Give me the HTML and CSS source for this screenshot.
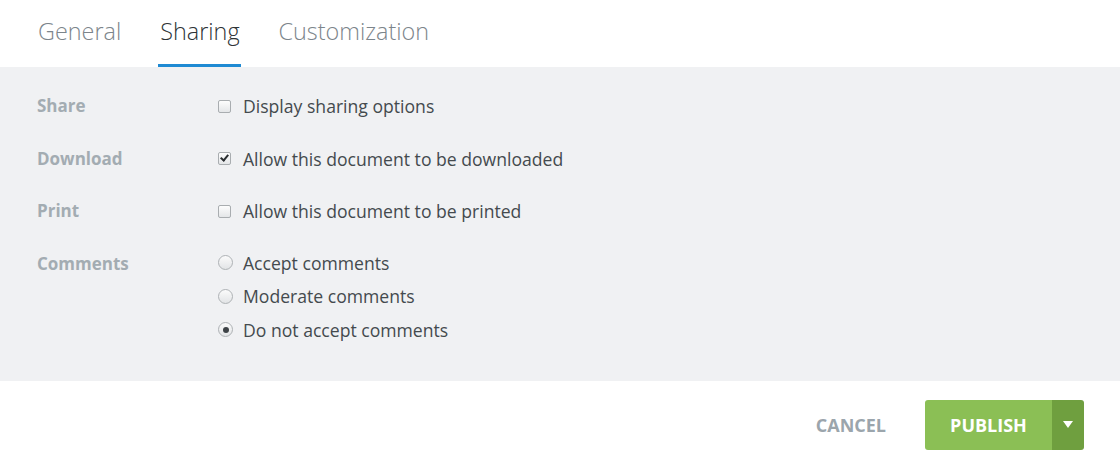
FILE: index.html
```html
<!DOCTYPE html>
<html lang="en">
<head>
  <meta charset="UTF-8" />
  <title>Document settings</title>
  <link rel="stylesheet" href="styles.css">
</head>
<body>
  <div class="tabs">
    <div class="tab">General</div>
    <div class="tab active">Sharing</div>
    <div class="tab">Customization</div>
  </div>

  <div class="panel">
    <div class="row">
      <div class="label">Share</div>
      <div class="options">
        <label class="opt"><span class="box"></span>Display sharing options</label>
      </div>
    </div>
    <div class="row">
      <div class="label">Download</div>
      <div class="options">
        <label class="opt"><span class="box checked"></span>Allow this document to be downloaded</label>
      </div>
    </div>
    <div class="row">
      <div class="label">Print</div>
      <div class="options">
        <label class="opt"><span class="box"></span>Allow this document to be printed</label>
      </div>
    </div>
    <div class="row">
      <div class="label">Comments</div>
      <div class="options radios">
        <label class="opt"><span class="radio"></span>Accept comments</label>
        <label class="opt"><span class="radio"></span>Moderate comments</label>
        <label class="opt"><span class="radio on"></span>Do not accept comments</label>
      </div>
    </div>
  </div>

  <div class="footer">
    <button class="cancel">CANCEL</button>
    <div class="publish">
      <button class="publish-main">PUBLISH</button>
      <button class="publish-more"><span class="caret"></span></button>
    </div>
  </div>
</body>
</html>
```

FILE: styles.css
```css
body {
  margin: 0;
  font-family: 'Open Sans', sans-serif;
  background: #ffffff;
  width: 1120px;
  height: 468px;
  overflow: hidden;
}

.tabs {
  display: flex;
  gap: 36px;
  padding: 0 0 0 36px;
  height: 67px;
  align-items: stretch;
}

.tab {
  font-size: 23.4px;
  font-weight: 300;
  color: #7c858b;
  padding: 15px 1px 0 2px;
  box-sizing: border-box;
  border-bottom: 3px solid transparent;
}

.tab.active {
  color: #2e3336;
  border-bottom-color: #1f8ad3;
}

.panel {
  background: #f0f1f3;
  height: 314px;
  box-sizing: border-box;
  padding: 21px 0 0 37px;
}

.row {
  display: flex;
  margin-bottom: 16.7px;
}

.label {
  width: 181px;
  font-size: 17px;
  font-weight: 700;
  color: #a3acb2;
  line-height: 36px;
}

.options {
  display: flex;
  flex-direction: column;
}

.opt {
  display: flex;
  align-items: center;
  font-size: 17.6px;
  color: #444a4e;
  height: 36px;
}

.radios .opt {
  height: 33.5px;
}

.box {
  width: 11px;
  height: 11px;
  border: 1px solid #a9adb0;
  border-radius: 2px;
  background: linear-gradient(#fdfdfd, #e4e6e8);
  margin-right: 12px;
  position: relative;
}

.box.checked::after {
  content: "";
  position: absolute;
  left: 3px;
  top: 0px;
  width: 3px;
  height: 6px;
  border: solid #2a2e31;
  border-width: 0 2px 2px 0;
  transform: rotate(40deg);
}

.radio {
  width: 15px;
  height: 15px;
  border: 1px solid #aeb2b5;
  border-radius: 50%;
  background: linear-gradient(#fbfbfb, #e2e4e6);
  margin-right: 10px;
  position: relative;
  box-sizing: border-box;
}

.radio.on::after {
  content: "";
  position: absolute;
  left: 3.5px;
  top: 3.5px;
  width: 6px;
  height: 6px;
  border-radius: 50%;
  background: #3d4246;
}

.footer {
  display: flex;
  justify-content: flex-end;
  align-items: center;
  height: 87px;
  padding-right: 36px;
  gap: 39px;
}

button {
  font-family: 'Open Sans', sans-serif;
  border: none;
  cursor: pointer;
}

.cancel {
  background: none;
  color: #9ba5ac;
  font-weight: 700;
  font-size: 18px;
  padding: 0;
}

.publish {
  display: flex;
  height: 50px;
  border-radius: 3px;
  overflow: hidden;
}

.publish-main {
  width: 127px;
  background: #8bbf55;
  color: #ffffff;
  font-weight: 700;
  font-size: 18px;
}

.publish-more {
  width: 32px;
  background: #6f9f3f;
  display: flex;
  align-items: center;
  justify-content: center;
}

.caret {
  width: 0;
  height: 0;
  border-left: 5px solid transparent;
  border-right: 5px solid transparent;
  border-top: 7px solid #ffffff;
}
```
